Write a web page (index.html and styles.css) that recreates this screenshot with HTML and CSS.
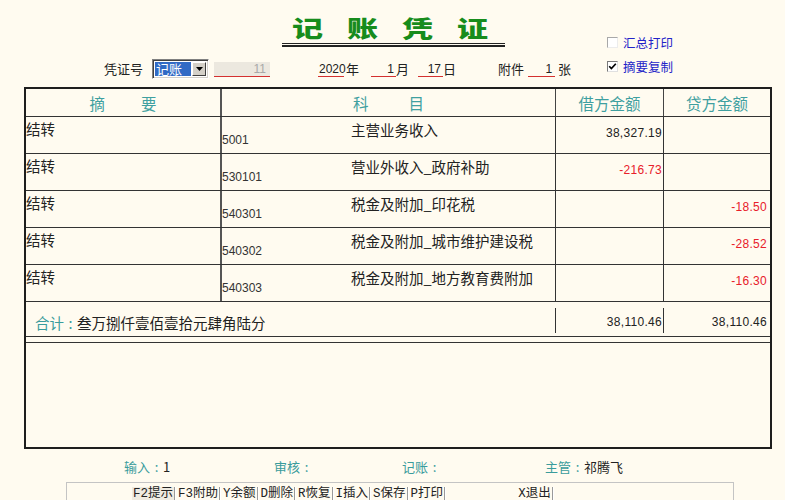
FILE: index.html
```html
<!DOCTYPE html>
<html lang="zh-CN">
<head>
<meta charset="utf-8">
<title>记账凭证</title>
<link rel="stylesheet" href="styles.css">
</head>
<body>
<div class="page">
  <div class="head">
    <div class="head-main">
      <div class="title-wrap">
        <h1 class="title"><span>记</span><span>账</span><span>凭</span><span>证</span></h1>
        <div class="rule"></div>
      </div>
      <div class="fields">
        <span class="lbl">凭证号</span>
        <span class="select">
          <span class="sel-val">记账</span>
          <span class="sel-btn"><svg width="7" height="4" viewBox="0 0 7 4"><path d="M0 0h7L3.5 4z" fill="#000"/></svg></span>
        </span>
        <span class="numbox">11</span>
        <span class="ul w-year">2020</span><span class="unit u-year">年</span>
        <span class="ul w-month">1</span><span class="unit">月</span>
        <span class="ul w-day">17</span><span class="unit">日</span>
        <span class="lbl attach">附件</span>
        <span class="ul w-att">1</span><span class="unit u-att">张</span>
      </div>
    </div>
    <div class="opts">
      <label class="opt"><span class="cb"></span>汇总打印</label>
      <label class="opt"><span class="cb checked"><svg width="9" height="9" viewBox="0 0 9 9"><path d="M1.2 4.2L3.4 6.6L7.8 1.8" fill="none" stroke="#000" stroke-width="1.7"/></svg></span>摘要复制</label>
    </div>
  </div>

  <div class="voucher">
    <div class="grid-row hdr">
      <div class="hc"><span class="sp-sum">摘要</span></div>
      <div class="hc"><span class="sp-subj">科目</span></div>
      <div class="hc">借方金额</div>
      <div class="hc">贷方金额</div>
    </div>

    <div class="grid-row row">
      <div class="c-sum">结转</div>
      <div class="c-subj"><span class="code">5001</span><span class="name">主营业务收入</span></div>
      <div class="amt">38,327.19</div>
      <div class="amt cr"></div>
    </div>
    <div class="grid-row row">
      <div class="c-sum">结转</div>
      <div class="c-subj"><span class="code">530101</span><span class="name">营业外收入_政府补助</span></div>
      <div class="amt neg">-216.73</div>
      <div class="amt cr"></div>
    </div>
    <div class="grid-row row">
      <div class="c-sum">结转</div>
      <div class="c-subj"><span class="code">540301</span><span class="name">税金及附加_印花税</span></div>
      <div class="amt"></div>
      <div class="amt cr neg">-18.50</div>
    </div>
    <div class="grid-row row">
      <div class="c-sum">结转</div>
      <div class="c-subj"><span class="code">540302</span><span class="name">税金及附加_城市维护建设税</span></div>
      <div class="amt"></div>
      <div class="amt cr neg">-28.52</div>
    </div>
    <div class="grid-row row">
      <div class="c-sum">结转</div>
      <div class="c-subj"><span class="code">540303</span><span class="name">税金及附加_地方教育费附加</span></div>
      <div class="amt"></div>
      <div class="amt cr neg">-16.30</div>
    </div>

    <div class="grid-row total">
      <div class="t-label"><span class="teal">合计<span class="colon">:</span></span>叁万捌仟壹佰壹拾元肆角陆分</div>
      <div class="t-amt">38,110.46</div>
      <div class="t-amt cr">38,110.46</div>
    </div>
    <div class="spacer"></div>
    <div class="empty"></div>
  </div>

  <div class="signs">
    <div class="sign s-in"><span class="teal">输入<span class="colon">:</span></span>1</div>
    <div class="sign s-chk"><span class="teal">审核<span class="colon">:</span></span></div>
    <div class="sign s-acc"><span class="teal">记账<span class="colon">:</span></span></div>
    <div class="sign"><span class="teal">主管<span class="colon">:</span></span>祁腾飞</div>
  </div>

  <div class="toolbar">
    <span class="btn first">F2提示</span>
    <span class="btn">F3附助</span>
    <span class="btn">Y余额</span>
    <span class="btn">D删除</span>
    <span class="btn">R恢复</span>
    <span class="btn">I插入</span>
    <span class="btn">S保存</span>
    <span class="btn">P打印</span>
    <span class="btn exit">X退出</span>
  </div>
</div>
</body>
</html>
```

FILE: styles.css
```css
* { box-sizing: border-box; }

body {
  margin: 0;
  background: #fffbf0;
  font-family: "Noto Sans CJK SC", sans-serif;
  color: #222;
  width: 785px;
  height: 500px;
  overflow: hidden;
}

.head {
  display: flex;
  height: 87px;
}

.head-main {
  width: 600px;
  flex: none;
}

.title-wrap {
  margin-left: 282px;
  width: 223px;
  padding-top: 12px;
}

.title {
  margin: 0 0 0 -2px;
  display: flex;
  height: 30px;
  font-size: 23px;
  font-weight: 900;
  line-height: 30px;
  color: #178c1c;
}

.title span {
  display: inline-block;
  width: 55px;
  text-align: center;
  transform: scaleX(1.35);
}

.rule {
  margin-top: 1px;
  height: 4px;
  border-top: 1px solid #222;
  border-bottom: 2px solid #222;
}

.fields {
  display: flex;
  align-items: center;
  height: 20px;
  margin-top: 12px;
  padding-left: 104px;
  font-size: 13px;
  line-height: 16px;
}

.select {
  margin-left: 9px;
  width: 57px;
  height: 20px;
  display: flex;
  padding: 1px;
  border: 1px solid;
  border-color: #808080 #fff #fff #808080;
  box-shadow: inset 1px 1px #404040, inset -1px -1px #d4d0c8;
  background: #fff;
}

.sel-val {
  margin: 1px 0 1px 1px;
  width: 36px;
  background: #316ac5;
  color: #fff;
  font-size: 13px;
  line-height: 14px;
  padding-left: 1px;
}

.sel-btn {
  flex: 1;
  margin: 1px;
  background: #d4d0c8;
  border: 1px solid;
  border-color: #fff #404040 #404040 #fff;
  display: flex;
  align-items: center;
  justify-content: center;
}

.numbox {
  margin-left: 5px;
  width: 56px;
  height: 15px;
  background: #ece8df;
  border-bottom: 1px solid #d43030;
  color: #a8a8a8;
  font: 12px/14px "Liberation Sans", sans-serif;
  text-align: right;
  padding-right: 4px;
}

.ul {
  height: 15px;
  border-bottom: 1px solid #d43030;
  font: 12px/14px "Liberation Sans", sans-serif;
  color: #222;
  text-align: right;
}

.w-year { margin-left: 48px; width: 26px; text-align: left; padding-left: 1px; }
.u-year { margin-left: 2px; }
.w-month { margin-left: 12px; width: 25px; padding-right: 2px; }
.w-day { margin-left: 9px; width: 25px; padding-right: 2px; }
.attach { margin-left: 42px; }
.w-att { margin-left: 4px; width: 27px; padding-right: 3px; }
.u-att { margin-left: 3px; }

.opts {
  display: flex;
  flex-direction: column;
  padding: 30px 0 0 7px;
}

.opt {
  height: 24px;
  display: flex;
  align-items: center;
  font-size: 12.5px;
  color: #2323c8;
}

.cb {
  width: 11px;
  height: 11px;
  margin-right: 5px;
  border: 1px solid;
  border-color: #a8a8a8 #ececec #ececec #a8a8a8;
  background: #fff;
  display: flex;
  align-items: center;
  justify-content: center;
}

.cb.checked {
  border-color: #7a7a7a #e0e0e0 #e0e0e0 #7a7a7a;
}

.voucher {
  margin-left: 24px;
  width: 748px;
  height: 362px;
  border: 2px solid #1e1e1e;
  display: flex;
  flex-direction: column;
}

.grid-row {
  display: grid;
  grid-template-columns: 194px 335px 108px 107px;
  flex: none;
}

.hdr {
  height: 28px;
  border-bottom: 1px solid #333;
}

.hc {
  display: flex;
  align-items: center;
  justify-content: center;
  color: #3fa0a0;
  font-size: 15.5px;
}

.hc + .hc { border-left: 1px solid #444; }
.hdr .hc:nth-child(2) { border-left: 2px solid #555; }

.sp-sum { letter-spacing: 36px; margin-right: -36px; }
.sp-subj { letter-spacing: 40px; margin-right: -40px; }

.row {
  height: 37px;
  border-bottom: 1px solid #333;
}

.c-sum {
  padding-top: 3px;
  font-size: 14.5px;
  line-height: 18px;
}

.c-subj {
  border-left: 2px solid #555;
  display: flex;
}

.code {
  width: 129px;
  flex: none;
  padding-top: 16px;
  font: 12px/14px "Liberation Sans", sans-serif;
  color: #333;
}

.name {
  padding-top: 4px;
  font-size: 14.5px;
  line-height: 18px;
}

.amt {
  border-left: 1px solid #333;
  text-align: right;
  padding: 9px 1px 0 0;
  font: 12px/14px "Liberation Sans", sans-serif;
  letter-spacing: 0.3px;
  color: #222;
}

.amt.cr { padding-right: 3px; }
.neg { color: #e8202a !important; }

.total {
  height: 35px;
  border-bottom: 1px solid #333;
  align-items: start;
}

.t-label {
  grid-column: 1 / 3;
  padding: 12px 0 0 9px;
  font-size: 14.5px;
  line-height: 18px;
}

.teal { color: #3a9c9c; }

.colon {
  display: inline-block;
  width: 13px;
  text-align: center;
}

.t-amt {
  margin-top: 6px;
  height: 25px;
  border-left: 1px solid #333;
  text-align: right;
  padding: 7px 1px 0 0;
  font: 12px/14px "Liberation Sans", sans-serif;
  letter-spacing: 0.3px;
}

.t-amt.cr { padding-right: 3px; }

.spacer {
  flex: none;
  height: 6px;
  border-bottom: 1px solid #333;
}

.empty { flex: 1; }

.signs {
  display: flex;
  margin-top: 9px;
  padding-left: 124px;
  font-size: 13px;
  line-height: 18px;
  height: 18px;
}

.s-in { width: 150px; }
.s-chk { width: 128px; }
.s-acc { width: 143px; }

.toolbar {
  margin: 6px 0 0 66px;
  width: 668px;
  height: 30px;
  border: 1px solid #c4c4c4;
  display: flex;
  padding: 4px 0 0 65px;
}

.btn {
  font: 12.5px/14px "Liberation Mono", "Noto Sans CJK SC", monospace;
  padding: 0 1px;
  height: 20px;
  border-right: 1px solid #9a9a9a;
  box-shadow: 1px 0 0 #fff;
  margin-right: 2px;
  color: #222;
}

.btn.first { background: #efebe1; }
.btn.exit { margin-left: 70px; }
```
